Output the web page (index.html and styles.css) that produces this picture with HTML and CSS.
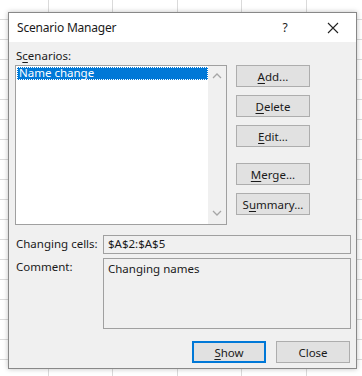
FILE: index.html
```html
<!DOCTYPE html>
<html lang="en">
<head>
    <meta charset="UTF-8">
    <title>Scenario Manager</title>
    <link rel="stylesheet" href="styles.css">
</head>
<body>
<div class="dialog">
    <div class="titlebar">
        <span class="title">Scenario Manager</span>
        <span class="help">?</span>
        <span class="close">
            <svg width="12" height="12" viewBox="0 0 12 12"><path d="M1 1L11 11M11 1L1 11" stroke="#222" stroke-width="1.1" fill="none"/></svg>
        </span>
    </div>
    <div class="body">
        <div class="label">S<u>c</u>enarios:</div>
        <div class="top">
            <div class="listbox">
                <div class="items">
                    <div class="item on">Name change</div>
                </div>
                <div class="scroll">
                    <svg width="10" height="6" viewBox="0 0 10 6"><path d="M1 5L5 1L9 5" stroke="#a6a6a6" stroke-width="1.3" fill="none"/></svg>
                    <svg width="10" height="6" viewBox="0 0 10 6"><path d="M1 1L5 5L9 1" stroke="#a6a6a6" stroke-width="1.3" fill="none"/></svg>
                </div>
            </div>
            <div class="buttons">
                <button class="btn"><u>A</u>dd...</button>
                <button class="btn"><u>D</u>elete</button>
                <button class="btn"><u>E</u>dit...</button>
                <button class="btn gap"><u>M</u>erge...</button>
                <button class="btn">S<u>u</u>mmary...</button>
            </div>
        </div>
        <div class="fields">
            <div class="flabel">Changing cells:</div>
            <div class="field">$A$2:$A$5</div>
            <div class="flabel">Comment:</div>
            <div class="field comment">Changing names</div>
        </div>
        <div class="footer">
            <button class="btn default"><u>S</u>how</button>
            <button class="btn">Close</button>
        </div>
    </div>
</div>
</body>
</html>
```

FILE: styles.css
```css
*{
    margin:0;
    padding:0;
    box-sizing: border-box;
}
body{
    width:362px;
    height:376px;
    overflow: hidden;
    padding:12px 0 0 8px;
    font-family: "Noto Sans", "Open Sans", sans-serif;
    font-size: 11.5px;
    color: #1a1a1a;
    background-color: #fff;
    background-image:
        repeating-linear-gradient(to right, transparent 0, transparent 48px, #dadada 48px, #dadada 49px, transparent 49px, transparent 64.4px),
        repeating-linear-gradient(to bottom, transparent 0, transparent 19px, #dadada 19px, #dadada 20px);
}
.dialog{
    width:349px;
    height:357px;
    border:1px solid #888;
    background: #f0f0f0;
    box-shadow: 0 0 5px rgba(0,0,0,.25);
    display: flex;
    flex-direction: column;
}
.titlebar{
    height:29px;
    background: #fff;
    display: flex;
    align-items: center;
    padding-left: 8px;
}
.title{
    flex: 1;
    font-size: 12px;
    letter-spacing: -0.2px;
}
.help{
    width:46px;
    text-align: center;
    margin-right: 2px;
    font-size: 12px;
}
.close{
    width:46px;
    height:29px;
    display: flex;
    align-items: center;
    justify-content: center;
}
.body{
    flex: 1;
    padding: 5px 5px 0 6px;
    display: flex;
    flex-direction: column;
}
.label{
    height:17px;
    line-height: 17px;
    padding-left: 1px;
    margin-bottom: 1px;
}
u{
    text-decoration: underline;
    text-underline-offset: 2px;
}
.top{
    display: flex;
}
.listbox{
    width:212px;
    height:160px;
    border:1px solid #a0a0a0;
    background: #fff;
    display: flex;
}
.items{
    flex: 1;
    padding: 1px 0 0 1px;
}
.item{
    height:13px;
    line-height: 12px;
    padding-left: 2px;
}
.item.on{
    background: #0078d7;
    color: #fff;
    outline: 1px dotted #fff;
    outline-offset: -1px;
}
.scroll{
    width:18px;
    background: #f0f0f0;
    display: flex;
    flex-direction: column;
    justify-content: space-between;
    align-items: center;
    padding: 7px 0 8px;
}
.buttons{
    margin-left: 9px;
    display: flex;
    flex-direction: column;
}
.btn{
    width:74px;
    height:22px;
    border:1px solid #adadad;
    background: #e1e1e1;
    font-family: inherit;
    font-size: 11.5px;
    color: #1a1a1a;
    margin-bottom: 8px;
}
.btn.gap{
    margin-top: 8px;
}
.fields{
    display: grid;
    grid-template-columns: 88px 1fr;
    row-gap: 4px;
    margin-top: 10px;
}
.flabel{
    padding-left: 1px;
    line-height: 18px;
}
.field{
    height:19px;
    border:1px solid #a0a0a0;
    padding-left: 4px;
    line-height: 16px;
}
.field.comment{
    height:71px;
    padding-top: 2px;
}
.footer{
    display: flex;
    justify-content: flex-end;
    gap: 10px;
    margin-top: 12px;
    padding-right: 1px;
}
.footer .btn{
    margin-bottom: 0;
}
.btn.default{
    border:2px solid #0078d7;
}
```
